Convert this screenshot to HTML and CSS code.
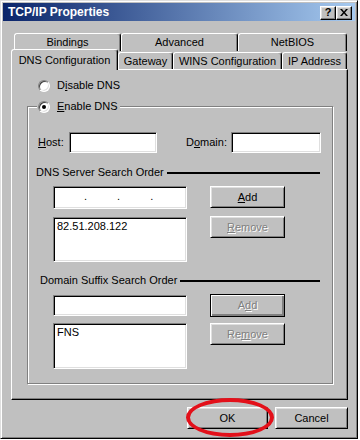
FILE: index.html
```html
<!DOCTYPE html>
<html>
<head>
<meta charset="utf-8">
<title>TCP/IP Properties</title>
<link rel="stylesheet" href="styles.css">
</head>
<body>
<div class="window">
  <div class="titlebar">
    <span class="title">TCP/IP Properties</span>
    <div class="tb-btns">
      <span class="tb-btn help">?</span>
      <span class="tb-btn close"><svg width="8" height="7" viewBox="0 0 8 7"><path d="M0 0h2l2 2.5L6 0h2L5 3.5 8 7H6L4 4.5 2 7H0l3-3.5z" fill="#000"/></svg></span>
    </div>
  </div>
  <div class="content">
    <div class="tabs">
      <div class="tabrow back">
        <div class="tab t-bind">Bindings</div>
        <div class="tab t-adv">Advanced</div>
        <div class="tab t-net">NetBIOS</div>
      </div>
      <div class="tabrow front">
        <div class="tab t-dns selected">DNS Configuration</div>
        <div class="tab t-gw">Gateway</div>
        <div class="tab t-wins">WINS Configuration</div>
        <div class="tab t-ip">IP Address</div>
      </div>
    </div>
    <div class="panel">
      <div class="radio-row">
        <span class="radio"></span>
        <span>D<u>i</u>sable DNS</span>
      </div>
      <fieldset class="group">
        <legend class="legend">
          <span class="radio checked"></span>
          <span><u>E</u>nable DNS</span>
        </legend>
        <div class="host-row">
          <span class="lbl-host"><u>H</u>ost:</span>
          <span class="sunken in-host"></span>
          <span class="lbl-domain">D<u>o</u>main:</span>
          <span class="sunken in-domain"></span>
        </div>
        <div class="sep-row sep1">
          <span>DNS Server Search Order</span>
          <span class="sep-line"></span>
        </div>
        <div class="list-grid grid1">
          <div class="col-left">
            <div class="sunken ip-field"><span>.</span><span>.</span><span>.</span></div>
            <div class="sunken listbox lb1">82.51.208.122</div>
          </div>
          <div class="col-right">
            <button class="btn"><u>A</u>dd</button>
            <button class="btn disabled"><u>R</u>emove</button>
          </div>
        </div>
        <div class="sep-row sep2">
          <span>Domain Suffix Search Order</span>
          <span class="sep-line"></span>
        </div>
        <div class="list-grid grid2">
          <div class="col-left col-left2">
            <div class="sunken text-field"></div>
            <div class="sunken listbox lb2">FNS</div>
          </div>
          <div class="col-right col-right2">
            <button class="btn default disabled">A<u>d</u>d</button>
            <button class="btn disabled">Re<u>m</u>ove</button>
          </div>
        </div>
      </fieldset>
    </div>
    <div class="footer">
      <button class="btn ok">OK</button>
      <button class="btn cancel">Cancel</button>
      <div class="mark"></div>
    </div>
  </div>
</div>
</body>
</html>
```
FILE: styles.css
```css
* { box-sizing: border-box; }
html, body { margin: 0; padding: 0; background: #fff; }
body {
  font-family: "Liberation Sans", Arial, sans-serif;
  font-size: 11px;
  line-height: 13px;
  color: #000;
}
u { text-decoration: underline; text-underline-offset: 1px; }

.window {
  width: 358px;
  height: 439px;
  background: #c0c0c0;
  border: 1px solid;
  border-color: #dfdfdf #000 #000 #dfdfdf;
  box-shadow: inset 1px 1px #fff, inset -1px -1px #808080;
  padding: 2px;
  display: flex;
  flex-direction: column;
}

.titlebar {
  height: 18px;
  background: linear-gradient(to right, #0a246a, #a6caf0);
  display: flex;
  align-items: center;
  padding: 0 3px 0 5px;
  color: #fff;
  font-weight: bold;
  font-size: 12px;
}
.tb-btns { margin-left: auto; display: flex; margin-top: 1px; }
.tb-btn {
  width: 16px;
  height: 14px;
  background: #c0c0c0;
  border: 1px solid;
  border-color: #fff #000 #000 #fff;
  box-shadow: inset -1px -1px #808080, inset 1px 1px #dfdfdf;
  display: flex;
  align-items: center;
  justify-content: center;
  color: #000;
  font-size: 11px;
  font-weight: bold;
}

.content {
  flex: 1;
  display: flex;
  flex-direction: column;
  padding: 12px 7px 0 8px;
}

.tabs { display: flex; flex-direction: column; }
.tabrow { display: flex; height: 18px; }
.tabrow.back { padding-left: 3px; }
.tabrow.front { align-items: flex-end; }
.tab {
  height: 18px;
  border: 1px solid;
  border-bottom: none;
  border-color: #fff #000 transparent #fff;
  box-shadow: inset -1px 0 #808080;
  border-radius: 3px 3px 0 0;
  display: flex;
  align-items: center;
  justify-content: center;
  white-space: nowrap;
  background: #c0c0c0;
}
.tabrow.front .tab { height: 17px; }
.tabrow.front .tab.selected {
  height: 21px;
  margin-bottom: -1px;
  position: relative;
  z-index: 1;
}
.t-bind { width: 107px; }
.t-adv { width: 117px; }
.t-net { width: 109px; }
.t-dns { width: 107px; }
.t-gw { width: 55px; }
.t-wins { width: 109px; }
.t-ip { width: 65px; }

.panel {
  width: 337px;
  height: 331px;
  border: 1px solid;
  border-color: #fff #000 #000 #fff;
  box-shadow: inset -1px -1px #808080;
  padding: 9px 0 0 15px;
}

.radio-row {
  display: flex;
  align-items: center;
  gap: 7px;
  height: 13px;
  margin-left: 11px;
}
.radio {
  width: 12px;
  height: 12px;
  border-radius: 50%;
  background: #fff;
  border: 1px solid;
  border-color: #808080 #fff #fff #808080;
  box-shadow: inset 1px 1px #404040, inset -1px -1px #dfdfdf;
  display: flex;
  align-items: center;
  justify-content: center;
  flex: none;
}
.radio.checked::after {
  content: "";
  width: 4px;
  height: 4px;
  border-radius: 50%;
  background: #000;
}

.group {
  width: 306px;
  height: 284px;
  margin: 8px 0 0 0;
  padding: 0;
  min-width: 0;
  border: 1px solid #808080;
  box-shadow: 1px 1px 0 #fff, inset 1px 1px 0 #fff;
}
.legend {
  display: flex;
  align-items: center;
  gap: 7px;
  height: 13px;
  padding: 0 2px 0 1px;
  margin-left: 9px;
  background: #c0c0c0;
}

.host-row {
  display: flex;
  align-items: center;
  height: 21px;
  margin: 19px 0 0 10px;
}
.lbl-host { width: 31px; }
.in-host { width: 88px; height: 21px; }
.lbl-domain { width: 45px; margin-left: 29px; }
.in-domain { width: 90px; height: 21px; }

.sunken {
  display: block;
  background: #fff;
  border: 1px solid;
  border-color: #808080 #fff #fff #808080;
  box-shadow: inset 1px 1px #000, inset -1px -1px #dfdfdf;
}

.sep-row {
  display: flex;
  align-items: center;
  height: 13px;
  margin-right: 12px;
}
.sep1 { margin-top: 13px; margin-left: 8px; }
.sep2 { margin-top: 12px; margin-left: 12px; }
.sep-line {
  flex: 1;
  height: 2px;
  background: #000;
  margin-left: 3px;
}

.list-grid {
  display: flex;
  gap: 23px;
  margin-left: 25px;
}
.grid1 { margin-top: 7px; }
.grid2 { margin-top: 7px; }
.col-left { display: flex; flex-direction: column; gap: 8px; width: 134px; }
.col-right { display: flex; flex-direction: column; gap: 8px; }
.col-left2 { padding-top: 1px; gap: 7px; }
.col-right2 { gap: 6px; }

.ip-field {
  height: 23px;
  display: flex;
  align-items: center;
  gap: 30px;
  padding: 0 0 2px 30px;
}
.text-field { height: 21px; }
.listbox { padding: 2px 3px; }
.lb1 { height: 45px; }
.lb2 { height: 46px; }

.btn {
  width: 75px;
  height: 22px;
  font: inherit;
  color: #000;
  background: #c0c0c0;
  border: 1px solid;
  border-color: #fff #000 #000 #fff;
  box-shadow: inset 1px 1px #dfdfdf, inset -1px -1px #808080;
  padding: 0;
  display: flex;
  align-items: center;
  justify-content: center;
}
.btn.default {
  height: 23px;
  border-color: #000;
  box-shadow: inset 1px 1px #fff, inset -1px -1px #808080, inset -2px -2px #808080;
}
.btn.disabled {
  color: #808080;
  text-shadow: 1px 1px 0 #fff;
}

.footer {
  position: relative;
  display: flex;
  justify-content: flex-end;
  gap: 7px;
  margin-top: 7px;
}
.btn.ok { width: 81px; }
.btn.cancel { width: 73px; }
.mark {
  position: absolute;
  left: 175px;
  top: -9px;
  width: 88px;
  height: 39px;
  border: 4px solid #e3101a;
  border-radius: 50%;
}
```
